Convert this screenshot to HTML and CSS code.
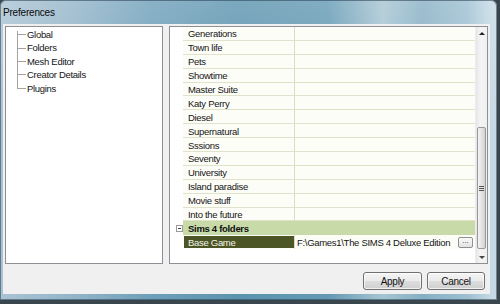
FILE: index.html
```html
<!DOCTYPE html>
<html>
<head>
<meta charset="utf-8">
<link rel="stylesheet" href="styles.css">
</head>
<body>
<div class="window">
  <div class="titlebar">Preferences</div>
  <div class="client">
    <div class="panes">
      <ul class="tree">
        <li class="first">Global</li>
        <li>Folders</li>
        <li>Mesh Editor</li>
        <li>Creator Details</li>
        <li class="last">Plugins</li>
      </ul>
      <div class="grid-pane">
        <div class="grid">
          <div class="row"><span class="m"></span><span class="k">Generations</span><span class="v"></span></div>
          <div class="row"><span class="m"></span><span class="k">Town life</span><span class="v"></span></div>
          <div class="row"><span class="m"></span><span class="k">Pets</span><span class="v"></span></div>
          <div class="row"><span class="m"></span><span class="k">Showtime</span><span class="v"></span></div>
          <div class="row"><span class="m"></span><span class="k">Master Suite</span><span class="v"></span></div>
          <div class="row"><span class="m"></span><span class="k">Katy Perry</span><span class="v"></span></div>
          <div class="row"><span class="m"></span><span class="k">Diesel</span><span class="v"></span></div>
          <div class="row"><span class="m"></span><span class="k">Supernatural</span><span class="v"></span></div>
          <div class="row"><span class="m"></span><span class="k">Sssions</span><span class="v"></span></div>
          <div class="row"><span class="m"></span><span class="k">Seventy</span><span class="v"></span></div>
          <div class="row"><span class="m"></span><span class="k">University</span><span class="v"></span></div>
          <div class="row"><span class="m"></span><span class="k">Island paradise</span><span class="v"></span></div>
          <div class="row"><span class="m"></span><span class="k">Movie stuff</span><span class="v"></span></div>
          <div class="row"><span class="m"></span><span class="k">Into the future</span><span class="v"></span></div>
          <div class="row cat"><span class="m"><span class="minus"></span></span><span class="k">Sims 4 folders</span></div>
          <div class="row sel"><span class="m"></span><span class="k">Base Game</span><span class="v"><span class="path">F:\Games1\The SIMS 4 Deluxe Edition</span><span class="dots">...</span></span></div>
        </div>
        <div class="scrollbar">
          <div class="sb-btn"><span class="arrow-up"></span></div>
          <div class="sb-track">
            <div class="sb-space"></div>
            <div class="sb-thumb"><span class="grip"></span></div>
          </div>
          <div class="sb-btn"><span class="arrow-down"></span></div>
        </div>
      </div>
    </div>
    <div class="buttons">
      <button class="btn apply">Apply</button>
      <button class="btn cancel">Cancel</button>
    </div>
  </div>
</div>
</body>
</html>
```
FILE: styles.css
```css
* { box-sizing: border-box; margin: 0; padding: 0; }
html, body { width: 500px; height: 304px; overflow: hidden; }
body {
  background: #3a464e;
  font-family: "Liberation Sans", Arial, sans-serif;
  font-size: 9.5px;
  letter-spacing: -0.3px;
  color: #141414;
}
.window {
  width: 497px;
  height: 300px;
  border-radius: 6px 6px 0 0;
  background:
    linear-gradient(180deg, rgba(255,255,255,0.2) 0%, rgba(255,255,255,0) 45%),
    linear-gradient(90deg, #a9c3d3 0%, #94b5c9 14%, #6e9fb9 30%, #5b93ae 48%, #6399b3 66%, #a6c4d2 77%, #86afc4 85%, #9dbfd1 94%, #c6dae5 99%);
  box-shadow: inset 0 0 0 1px rgba(40, 60, 80, 0.55);
  display: flex;
  flex-direction: column;
  padding: 0 7px 6px 3px;
}
.titlebar {
  height: 24px;
  display: flex;
  align-items: center;
  padding-top: 1px;
  font-size: 10px;
  letter-spacing: -0.2px;
  color: #0a0a0a;
}
.client {
  flex: 1;
  background: #f0f0f0;
  display: flex;
  flex-direction: column;
  padding: 2px 2px 4px 2px;
}
.panes {
  display: flex;
  gap: 6px;
  height: 238px;
}
.tree {
  width: 158px;
  border: 1px solid #8c8f94;
  background: #fff;
  list-style: none;
  padding-top: 1px;
}
.tree li {
  height: 13.4px;
  line-height: 13.4px;
  padding-left: 21px;
  white-space: nowrap;
  background:
    linear-gradient(#a3a3a3, #a3a3a3) 11px 0 / 1px 100% no-repeat,
    linear-gradient(#a3a3a3, #a3a3a3) 11px 50% / 9px 1px no-repeat;
}
.tree li.first {
  background:
    linear-gradient(#a3a3a3, #a3a3a3) 11px 3px / 1px 100% no-repeat,
    linear-gradient(#a3a3a3, #a3a3a3) 11px 50% / 9px 1px no-repeat;
}
.tree li.last {
  background:
    linear-gradient(#a3a3a3, #a3a3a3) 11px 0 / 1px 50% no-repeat,
    linear-gradient(#a3a3a3, #a3a3a3) 11px 50% / 9px 1px no-repeat;
}
.grid-pane {
  flex: 1;
  border: 1px solid #8c8f94;
  background: #fff;
  display: flex;
}
.grid {
  flex: 1;
  display: flex;
  flex-direction: column;
}
.row {
  display: grid;
  grid-template-columns: 13px 111px 1fr;
  height: 13.9px;
  flex: none;
}
.row .m { background: #fff; display: flex; align-items: center; }
.row .k {
  display: flex;
  align-items: center;
  padding-left: 5px;
  padding-top: 1px;
  white-space: nowrap;
  background: #fdfdf8;
  border-bottom: 1px solid #e1e2cb;
}
.row .v {
  display: flex;
  align-items: center;
  background: #fdfdf8;
  border-left: 1px solid #dcdcc2;
  border-bottom: 1px solid #e1e2cb;
}
.row.cat .k {
  grid-column: span 2;
  background: #c7daa8;
  border-bottom: 1px solid #c7daa8;
  font-weight: bold;
  color: #0e0e0e;
}
.minus {
  width: 7px;
  height: 7px;
  margin-left: 6px;
  border: 1px solid #9a9a9a;
  background: linear-gradient(#444, #444) center / 3px 1px no-repeat, #fff;
}
.row.sel .k {
  background: #4b5525;
  color: #f4f4ec;
  border-bottom: 1px solid #fdfdf8;
  border-top: 1px solid #fdfdf8;
  padding-left: 4px;
  padding-top: 0;
  margin-left: 1px;
}
.row.sel .v {
  padding-left: 2px;
  padding-top: 1px;
  justify-content: space-between;
  padding-right: 2px;
  border-bottom: none;
}
.path { white-space: nowrap; }
.dots {
  width: 15px;
  height: 11px;
  border: 1px solid #8f8f8f;
  border-radius: 2px;
  background: linear-gradient(#fbfbfb, #e2e2e2);
  font-size: 8px;
  line-height: 6px;
  text-align: center;
  letter-spacing: 0;
  color: #333;
}
.scrollbar {
  width: 12px;
  display: flex;
  flex-direction: column;
  background: linear-gradient(90deg, #e6e6e6, #f4f4f4 40%, #f0f0f0);
  border-left: 1px solid #ececec;
}
.sb-btn {
  height: 12px;
  display: flex;
  align-items: center;
  justify-content: center;
  flex: none;
}
.arrow-up {
  width: 0; height: 0;
  border-left: 3px solid transparent;
  border-right: 3px solid transparent;
  border-bottom: 3px solid #222;
}
.arrow-down {
  width: 0; height: 0;
  border-left: 3px solid transparent;
  border-right: 3px solid transparent;
  border-top: 3px solid #444;
}
.sb-track {
  flex: 1;
  display: flex;
  flex-direction: column;
}
.sb-space { height: 88px; flex: none; }
.sb-thumb {
  height: 122px;
  border: 1px solid #989898;
  border-radius: 2px;
  background: linear-gradient(90deg, #f3f3f3, #e4e4e4 50%, #d2d2d2);
  display: flex;
  align-items: center;
  justify-content: center;
  margin: 0 1px;
}
.grip {
  width: 5px;
  height: 5px;
  background: repeating-linear-gradient(180deg, #555 0 1px, transparent 1px 2px);
}
.buttons {
  display: flex;
  justify-content: flex-end;
  gap: 5px;
  margin-top: 8px;
  padding-right: 3px;
}
.btn {
  height: 18px;
  border: 1px solid #707070;
  border-radius: 3px;
  background: linear-gradient(#f4f4f4 0%, #ebebeb 48%, #dddddd 52%, #cfcfcf 100%);
  font-family: "Liberation Sans", Arial, sans-serif;
  font-size: 10px;
  letter-spacing: -0.3px;
  color: #111;
  box-shadow: inset 0 0 0 1px rgba(255,255,255,0.7);
}
.apply { width: 59px; }
.cancel { width: 58px; }
```
